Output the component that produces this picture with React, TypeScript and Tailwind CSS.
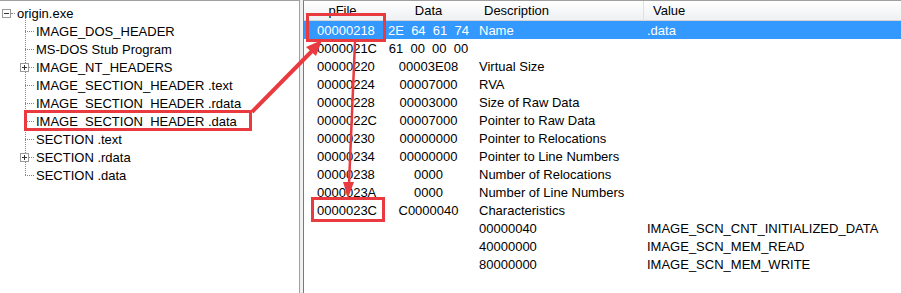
import React from 'react';

const TREE = [
  { label: 'IMAGE_DOS_HEADER', plus: false },
  { label: 'MS-DOS Stub Program', plus: false },
  { label: 'IMAGE_NT_HEADERS', plus: true },
  { label: 'IMAGE_SECTION_HEADER .text', plus: false },
  { label: 'IMAGE_SECTION_HEADER .rdata', plus: false },
  { label: 'IMAGE_SECTION_HEADER .data', plus: false },
  { label: 'SECTION .text', plus: false },
  { label: 'SECTION .rdata', plus: true },
  { label: 'SECTION .data', plus: false },
];

const ROWS = [
  { pfile: '00000218', data: '2E  64  61  74', desc: 'Name', value: '.data', selected: true },
  { pfile: '0000021C', data: '61  00  00  00', desc: '', value: '' },
  { pfile: '00000220', data: '00003E08', desc: 'Virtual Size', value: '' },
  { pfile: '00000224', data: '00007000', desc: 'RVA', value: '' },
  { pfile: '00000228', data: '00003000', desc: 'Size of Raw Data', value: '' },
  { pfile: '0000022C', data: '00007000', desc: 'Pointer to Raw Data', value: '' },
  { pfile: '00000230', data: '00000000', desc: 'Pointer to Relocations', value: '' },
  { pfile: '00000234', data: '00000000', desc: 'Pointer to Line Numbers', value: '' },
  { pfile: '00000238', data: '0000', desc: 'Number of Relocations', value: '' },
  { pfile: '0000023A', data: '0000', desc: 'Number of Line Numbers', value: '' },
  { pfile: '0000023C', data: 'C0000040', desc: 'Characteristics', value: '' },
  { pfile: '', data: '', desc: '00000040', value: 'IMAGE_SCN_CNT_INITIALIZED_DATA' },
  { pfile: '', data: '', desc: '40000000', value: 'IMAGE_SCN_MEM_READ' },
  { pfile: '', data: '', desc: '80000000', value: 'IMAGE_SCN_MEM_WRITE' },
];

const Box = ({ sign }: { sign: '+' | '-' }) => (
  <span className="relative inline-block w-[9px] h-[9px] border border-[#9a9a9a] bg-white">
    <span className="absolute left-[1px] right-[1px] top-[3px] h-px bg-[#333]" />
    {sign === '+' && <span className="absolute top-[1px] bottom-[1px] left-[3px] w-px bg-[#333]" />}
  </span>
);

export default function App() {
  return (
    <div
      className="relative flex w-[901px] h-[293px] bg-white text-[13px] text-black overflow-hidden"
      style={{ fontFamily: '"Liberation Sans", Arial, sans-serif' }}
    >
      {/* tree pane */}
      <div className="w-[300px] h-full border-t border-r border-[#a0a0a0] pt-[3px]">
        <div className="flex items-center h-[18px]">
          <span className="ml-[2px] flex items-center">
            <Box sign="-" />
          </span>
          <span className="w-[4px] border-t border-dotted border-[#888]" />
          <span className="ml-[2px] leading-none">origin.exe</span>
        </div>
        <div className="relative">
          <span className="absolute left-[25px] top-[-4px] bottom-[9px] border-l border-dotted border-[#888]" />
          {TREE.map((t) => (
            <div key={t.label} className="flex items-center h-[18px]">
              <span className="relative w-[36px] h-full flex items-center">
                <span className="absolute left-[25px] w-[9px] border-t border-dotted border-[#888]" />
                {t.plus && (
                  <span className="absolute left-[20px] flex items-center">
                    <Box sign="+" />
                  </span>
                )}
              </span>
              <span className="leading-none whitespace-nowrap">{t.label}</span>
            </div>
          ))}
        </div>
      </div>

      {/* splitter */}
      <div className="w-[3px] h-full bg-[#f0f0f0]" />

      {/* detail pane */}
      <div className="flex-1 h-full border-t border-l border-[#a0a0a0] border-l-[#7a7a7a]">
        <div className="grid grid-cols-[77px_95px_167px_1fr] h-[20px] items-center bg-gradient-to-b from-white to-[#eef0f3] border-b border-[#d5d5d5]">
          <span className="text-center">pFile</span>
          <span className="text-center">Data</span>
          <span className="pl-[8px]">Description</span>
          <span className="pl-[9px] border-l border-[#e0e0e0]">Value</span>
        </div>
        <div>
          {ROWS.map((r, i) => (
            <div
              key={i}
              className={`grid grid-cols-[77px_95px_167px_1fr] h-[18px] items-center whitespace-pre ${r.selected ? 'bg-[#3399ff] text-white' : ''}`}
            >
              <span className="pl-[13px]">{r.pfile}</span>
              <span className="text-center">{r.data}</span>
              <span className="pl-[3px]">{r.desc}</span>
              <span className="pl-[4px]">{r.value}</span>
            </div>
          ))}
        </div>
      </div>

      {/* annotation overlay */}
      <div className="absolute left-[306px] top-[13px] w-[80px] h-[29px] border-[3px] border-[#e83a3f]" />
      <div className="absolute left-[24px] top-[110px] w-[228px] h-[21px] border-[3px] border-[#e83a3f]" />
      <div className="absolute left-[311px] top-[197px] w-[74px] h-[25px] border-[3px] border-[#e83a3f]" />
      <svg className="absolute left-0 top-0 pointer-events-none" width="901" height="293">
        <line x1="252" y1="112" x2="313" y2="50" stroke="#e83a3f" strokeWidth="4" />
        <polygon points="322,40 306,47 316,56" fill="#e83a3f" />
        <line x1="355" y1="42" x2="349" y2="184" stroke="#e83a3f" strokeWidth="2.5" />
        <polygon points="348,198 343,182 354,182" fill="#e83a3f" />
      </svg>
    </div>
  );
}
